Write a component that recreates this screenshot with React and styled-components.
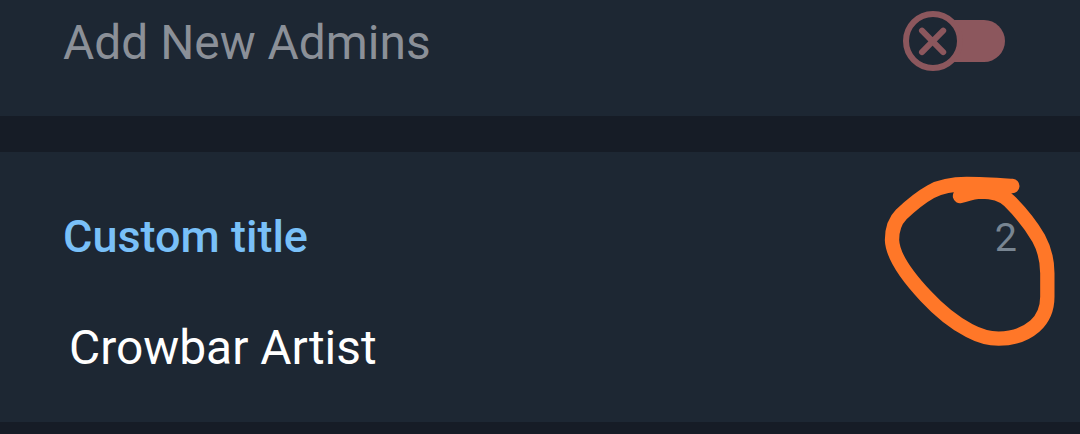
import React from 'react';
import styled, { createGlobalStyle } from 'styled-components';

const GlobalStyle = createGlobalStyle`
    body {
        margin: 0;
        background: #161c26;
        font-family: Roboto, sans-serif;
        overflow: hidden;
    }
`;

const Page = styled.main`
    height: 434px;
    display: flex;
    flex-direction: column;
    gap: 36px;
    overflow: hidden;
    background: #161c26;
`;

const PermissionRow = styled.section`
    height: 116px;
    flex: none;
    box-sizing: border-box;
    display: flex;
    align-items: flex-start;
    justify-content: space-between;
    padding: 10px 74px 0 63px;
    background: #1d2733;
`;

const PermissionLabel = styled.span`
    font-size: 47.9px;
    line-height: 66px;
    color: #8b9098;
`;

const SwitchIcon = styled.svg`
    width: 104px;
    height: 64px;
    display: block;
`;

const TitleSection = styled.section`
    position: relative;
    height: 270px;
    flex: none;
    box-sizing: border-box;
    padding: 54px 63px 0 63px;
    background: #1d2733;
`;

const SectionHeader = styled.div`
    display: flex;
    align-items: center;
    justify-content: space-between;
    height: 60px;
`;

const Heading = styled.h2`
    margin: 0;
    font-size: 45px;
    font-weight: 500;
    color: #79c0f8;
`;

const Counter = styled.span`
    padding-top: 2px;
    font-size: 39.5px;
    color: #788592;
`;

const TitleField = styled.div`
    padding: 54px 0 0 6px;
    font-size: 47.9px;
    line-height: 56px;
    color: #ffffff;
`;

const Marker = styled.svg`
    position: absolute;
    left: 870px;
    top: 8px;
    width: 200px;
    height: 200px;
    pointer-events: none;
`;

function LockedSwitch() {
    return (
        <SwitchIcon viewBox="902 10 104 64">
            <rect x="934" y="20" width="71" height="42" rx="21" fill="#8c575d" />
            <circle cx="933" cy="41" r="27" fill="#1d2733" stroke="#8c575d" strokeWidth="6" />
            <path d="M922 30.7L943.2 52.1M943.2 30.7L922 52.1" stroke="#8c575d" strokeWidth="6" strokeLinecap="round" />
        </SwitchIcon>
    );
}

export default function App() {
    const title = 'Crowbar Artist';
    const maxLength = 16;

    return (
        <>
            <GlobalStyle />
            <Page>
                <PermissionRow>
                    <PermissionLabel>Add New Admins</PermissionLabel>
                    <LockedSwitch />
                </PermissionRow>
                <TitleSection>
                    <SectionHeader>
                        <Heading>Custom title</Heading>
                        <Counter>{maxLength - title.length}</Counter>
                    </SectionHeader>
                    <TitleField>{title}</TitleField>
                    <Marker viewBox="0 0 600 600">
                        <path
                            d="M427 78C380 75 335 72 290 72C248 72 215 77 182 95C155 110 115 143 94 163C72 185 66 212 66 240C68 292 120 358 167 408C205 449 252 488 298 512C328 528 357 536 386 536C424 536 465 524 495 498C520 475 532 443 532 410V340C532 300 524 268 506 235C482 194 446 151 418 123C394 100 363 95 334 95C308 96 290 103 270 108"
                            fill="none"
                            stroke="#ff7728"
                            strokeWidth="43"
                            strokeLinecap="round"
                            strokeLinejoin="round"
                        />
                    </Marker>
                </TitleSection>
            </Page>
        </>
    );
}
